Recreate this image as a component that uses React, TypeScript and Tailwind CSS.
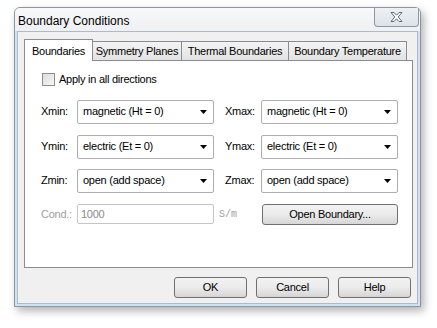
import React from "react";

function Select({ value }: { value: string }) {
  return (
    <div className="flex h-[24px] w-full items-center justify-between rounded-[2px] border border-[#abadb3] bg-white pl-[5px] pr-[6px]">
      <span>{value}</span>
      <svg width="7" height="4" viewBox="0 0 7 4">
        <path d="M0 0H7L3.5 4Z" fill="#000" />
      </svg>
    </div>
  );
}

function Button({ label, w }: { label: string; w: string }) {
  return (
    <div
      className={`flex h-[21px] ${w} items-center justify-center rounded-[3px] border border-[#707070] bg-gradient-to-b from-[#f2f2f2] via-[#ebebeb] to-[#d6d6d6] text-black`}
    >
      {label}
    </div>
  );
}

export default function App() {
  const tabs = ["Symmetry Planes", "Thermal Boundaries", "Boundary Temperature"];
  const rows = [
    ["Xmin:", "magnetic (Ht = 0)", "Xmax:", "magnetic (Ht = 0)", "mt-[12px]"],
    ["Ymin:", "electric (Et = 0)", "Ymax:", "electric (Et = 0)", "mt-[11px]"],
    ["Zmin:", "open (add space)", "Zmax:", "open (add space)", "mt-[10px]"],
  ];

  return (
    <div className="h-[328px] w-[437px] bg-white pl-[14px] pt-[7px] font-['Liberation_Sans',Arial,sans-serif] text-[11px] tracking-[-0.25px] text-black">
      {/* window */}
      <div className="flex h-[300px] w-[407px] flex-col rounded-t-[6px] border border-[#8a96a3] bg-[#d3e1ef] shadow-[3px_4px_8px_rgba(0,0,0,0.3)]">
        {/* title bar */}
        <div className="flex h-[23px] items-start justify-between rounded-t-[5px] bg-gradient-to-b from-[#f7f8fa] to-[#eef0f3] pl-[3px]">
          <span className="mt-[4px] text-[12px] tracking-normal text-black">Boundary Conditions</span>
          <div className="mr-[1px] flex h-[19px] w-[45px] items-center justify-center rounded-b-[4px] border border-t-0 border-[#8d96a1] bg-gradient-to-b from-[#eef1f4] to-[#dde3ea]">
            <svg width="13" height="10" viewBox="0 0 13 10">
              <path
                d="M1 0.5H4L6.5 3.2L9 0.5H12L8.2 5L12 9.5H9L6.5 6.8L4 9.5H1L4.8 5Z"
                fill="#fff"
                stroke="#5f6b78"
                strokeWidth="1"
                strokeLinejoin="round"
              />
            </svg>
          </div>
        </div>

        {/* client area */}
        <div className="mx-[2px] mb-[2px] flex flex-1 flex-col border border-[#a9bbcd] bg-[#f0f0f0] pl-[6px] pr-[6px] pt-[8px]">
          {/* tab headers */}
          <div className="flex h-[20px] items-end">
            <div className="relative z-10 -mb-px flex h-[22px] w-[69px] items-start justify-center border border-b-0 border-[#898c95] bg-white pt-[3px]">
              Boundaries
            </div>
            {tabs.map((t, i) => (
              <div
                key={t}
                className={`flex h-[19px] items-center justify-center border border-b-0 border-l-0 border-[#898c95] bg-gradient-to-b from-[#f3f3f3] to-[#e3e3e3] ${
                  i === 0 ? "w-[89px]" : i === 1 ? "w-[107px]" : "w-[118px]"
                }`}
              >
                {t}
              </div>
            ))}
          </div>

          {/* tab panel */}
          <div className="flex h-[208px] w-[389px] flex-col border border-[#898c95] bg-white pl-[16px]">
            <div className="mt-[10px] flex items-center gap-[4px]">
              <div className="ml-px h-[13px] w-[13px] border border-[#8f8f8f] bg-gradient-to-br from-[#dcdcdc] to-[#f7f7f7]" />
              <span>Apply in all directions</span>
            </div>

            {rows.map(([l1, v1, l2, v2, mt]) => (
              <div key={l1} className={`flex items-center ${mt}`}>
                <span className="w-[36px]">{l1}</span>
                <div className="w-[137px]">
                  <Select value={v1} />
                </div>
                <span className="w-[47px] pl-[11px]">{l2}</span>
                <div className="w-[137px]">
                  <Select value={v2} />
                </div>
              </div>
            ))}

            <div className="mt-[11px] flex items-center">
              <span className="w-[36px] text-[#a0a0a0]">Cond.:</span>
              <div className="flex h-[20px] w-[137px] items-center rounded-[2px] border border-[#c5c5c5] bg-white pl-[3px] text-[#8a8a8a]">
                1000
              </div>
              <span className="w-[48px] pl-[5px] font-['Liberation_Mono',monospace] text-[10px] tracking-normal text-[#a0a0a0]">
                S/m
              </span>
              <Button label="Open Boundary..." w="w-[136px]" />
            </div>
          </div>

          {/* dialog buttons */}
          <div className="mt-[9px] flex justify-end gap-[9px]">
            <Button label="OK" w="w-[73px]" />
            <Button label="Cancel" w="w-[73px]" />
            <Button label="Help" w="w-[73px]" />
          </div>
        </div>
      </div>
    </div>
  );
}
